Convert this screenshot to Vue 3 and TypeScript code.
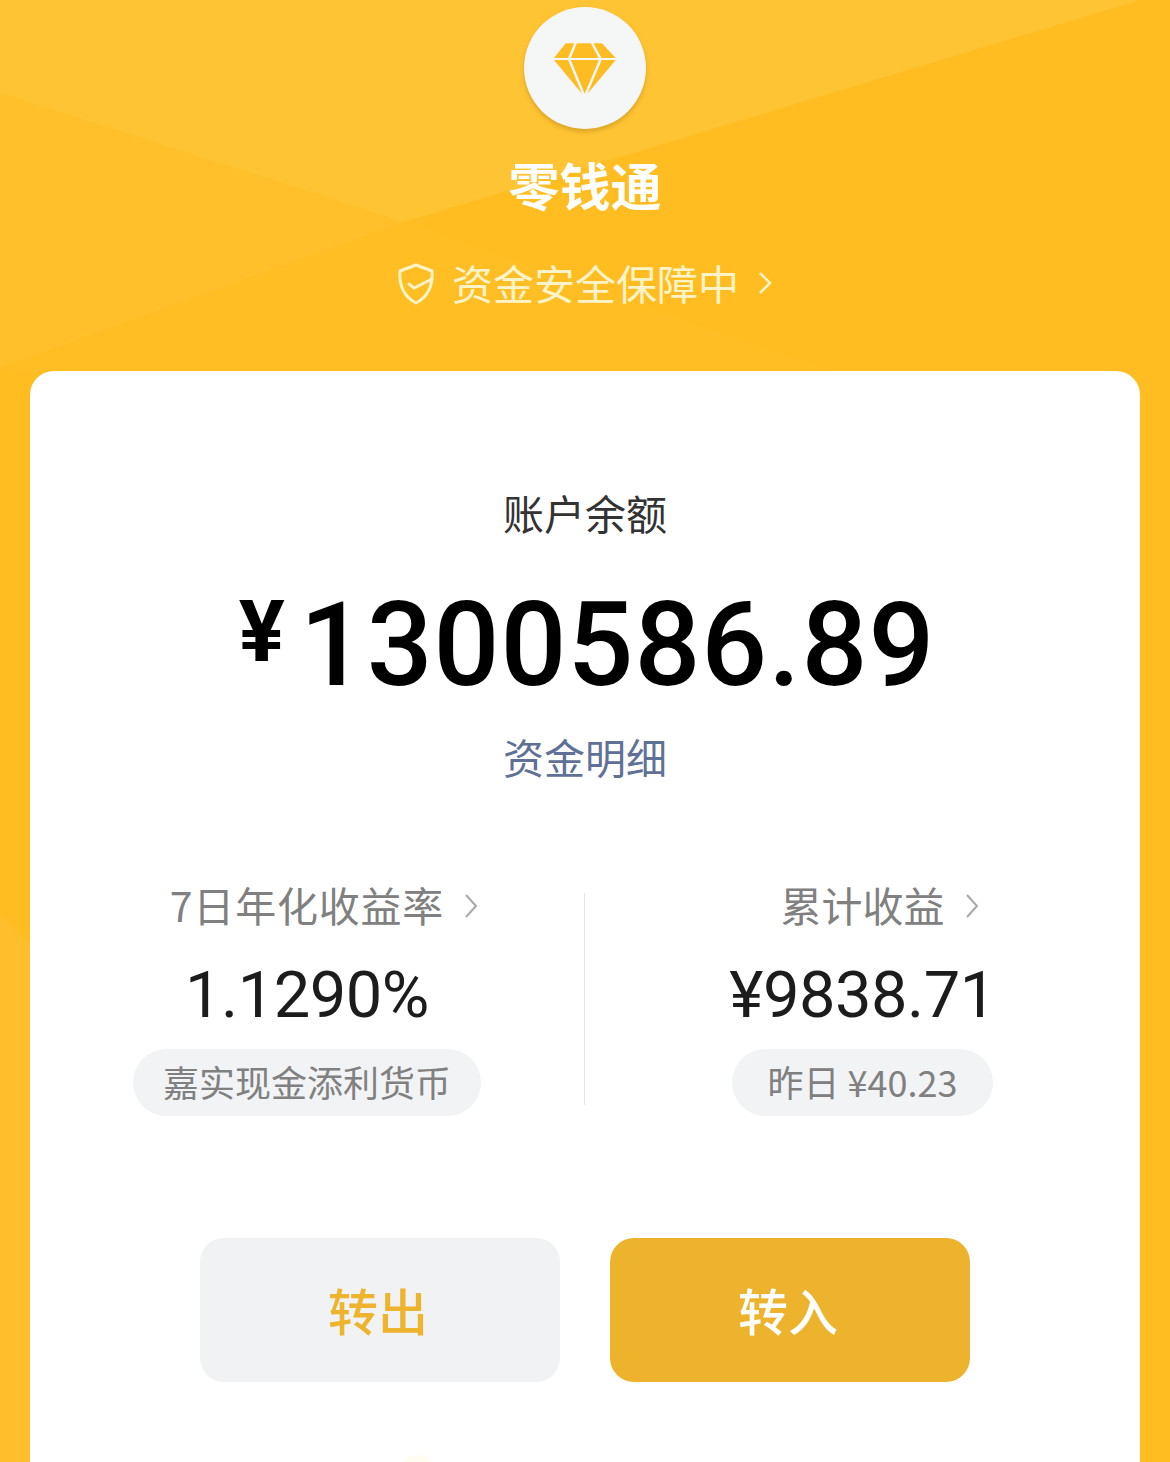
<script setup lang="ts">
interface Stat { label: string; value: string; pill: string; cls: string }
const stats: Stat[] = [
  { label: '7日年化收益率', value: '1.1290%', pill: '嘉实现金添利货币', cls: 'left' },
  { label: '累计收益', value: '¥9838.71', pill: '昨日 ¥40.23', cls: 'right' },
]
</script>

<template>
  <div class="page">
    <svg class="bg" width="1170" height="1462" viewBox="0 0 1170 1462" aria-hidden="true">
      <polygon points="0,0 1140,0 404,222 0,93" fill="#ffc433" />
      <polygon points="0,93 404,222 0,368" fill="#ffc02b" />
      <polygon points="404,222 830,371 500,371 0,371" fill="#ffbe23" />
      <polygon points="0,915 30,945 30,1462 0,1462" fill="#ffbf2c" />
    </svg>
    <header class="head">
      <div class="logo">
        <svg width="62" height="56" viewBox="0 0 62 56">
          <path d="M11.700 1.300H48L61.700 16H0Z" fill="#fdbc22" />
          <path d="M0 18H61.700L30.700 55Z" fill="#fdbc22" />
          <path d="M21.700 1 15 17 30.700 55M38 1 46.700 17 30.700 55" fill="none" stroke="#f5f6f6" stroke-width="2.500" />
        </svg>
      </div>
      <h1 class="title">零钱通</h1>
      <div class="safe">
        <svg class="shield" width="38" height="42" viewBox="0 0 38 42" fill="none" stroke="#fff3c9" stroke-width="3">
          <path d="M19 2 35 8C36 22 32 33 19 40 6 33 2 22 3 8Z" stroke-linejoin="round" />
          <path d="M12 21 17 25 35 16" stroke-linecap="round" />
        </svg>
        <span>资金安全保障中</span>
        <svg class="arrow" width="14" height="24" viewBox="0 0 14 24" fill="none" stroke="#fff3c9" stroke-width="2.500"><path d="M2 2 12 12 2 22" /></svg>
      </div>
    </header>

    <main class="card">
      <div class="balance-label">账户余额</div>
      <div class="balance"><span class="yen">¥</span><span>1300586.89</span></div>
      <div class="detail">资金明细</div>

      <section class="stats">
        <div v-for="s in stats" :key="s.label" class="stat" :class="s.cls">
          <div class="stat-label">
            <span>{{ s.label }}</span>
            <svg width="14" height="26" viewBox="0 0 14 26" fill="none" stroke="#a8a8a8" stroke-width="2"><path d="M2 2 12 13 2 24" /></svg>
          </div>
          <div class="stat-value">{{ s.value }}</div>
          <div class="pill">{{ s.pill }}</div>
        </div>
      </section>

      <div class="actions">
        <button class="btn out">转出</button>
        <button class="btn in">转入</button>
      </div>
      <span class="peek"></span>
    </main>
  </div>
</template>

<style>
html, body { margin: 0; background: #ffbd22; }
</style>

<style scoped>
.page {
  position: relative;
  width: 1170px;
  height: 1462px;
  overflow: hidden;
  background: #ffbd22;
  font-family: "Noto Sans CJK SC", "Noto Sans", sans-serif;
}
.bg { position: absolute; left: 0; top: 0; }
.head {
  position: relative;
  height: 371px;
  box-sizing: border-box;
  padding-top: 7px;
  display: flex;
  flex-direction: column;
  align-items: center;
}
.logo {
  width: 122px;
  height: 122px;
  border-radius: 50%;
  background: #f5f6f6;
  box-shadow: 0 3px 4px rgba(190, 140, 30, .55);
  display: flex;
  align-items: center;
  justify-content: center;
}
.logo svg { margin-top: 4px; }
.title {
  margin: 25px 0 0;
  font-size: 51px;
  line-height: 60px;
  font-weight: 700;
  color: #fff;
}
.safe {
  margin-top: 43px;
  display: flex;
  align-items: center;
  color: #fff3c9;
  font-size: 41px;
  line-height: 50px;
}
.shield { margin-right: 17px; margin-top: 3px; }
.arrow { margin-left: 19px; margin-right: 1px; margin-top: 2px; }
.card {
  position: relative;
  margin: 0 30px;
  height: 1200px;
  box-sizing: border-box;
  padding-top: 116px;
  background: #fff;
  border-radius: 24px 24px 0 0;
  display: flex;
  flex-direction: column;
  align-items: center;
}
.balance-label { font-size: 41px; line-height: 50px; color: #333; }
.balance {
  margin-top: 38px;
  display: flex;
  align-items: flex-start;
  font-family: Roboto, sans-serif;
  font-weight: 500;
  font-size: 116px;
  line-height: 140px;
  letter-spacing: 1px;
  color: #000;
}
.yen { font-size: 86px; line-height: 80px; font-weight: 700; margin: 17px 14px 0 4px; }
.detail { margin-top: 16px; font-size: 41px; line-height: 50px; color: #5f7196; }
.stats {
  margin-top: 112px;
  width: 100%;
  display: grid;
  grid-template-columns: 1fr 1fr;
}
.stat { display: flex; flex-direction: column; align-items: center; height: 212px; }
.stat.left { border-right: 1px solid #e3e3e3; }
.stat-label {
  position: relative;
  font-size: 41px;
  line-height: 22px;
  color: #808080;
  white-space: nowrap;
}
.left .stat-label { letter-spacing: .8px; }
.stat-label svg { position: absolute; left: 100%; top: 0; margin-left: 20px; }
.stat-value {
  margin-top: 40px;
  font-family: Roboto, sans-serif;
  font-size: 65px;
  line-height: 80px;
  letter-spacing: -.5px;
  color: #1c1c1c;
  white-space: nowrap;
}
.pill {
  margin-top: 14px;
  height: 67px;
  flex: none;
  padding: 0 30px;
  border-radius: 34px;
  background: #f2f3f5;
  color: #808080;
  font-size: 36px;
  line-height: 64px;
  white-space: nowrap;
}
.right .pill { padding: 0 36px; }
.actions { margin-top: 133px; display: flex; gap: 50px; }
.btn {
  width: 360px;
  height: 144px;
  padding: 0 4px 2px 0;
  border: 0;
  border-radius: 24px;
  font-family: inherit;
  font-size: 50px;
  font-weight: 500;
}
.out { background: #f1f2f4; color: #eeb42d; }
.in { background: #eeb32c; color: #fff; }
.peek {
  position: absolute;
  left: 372px;
  top: 1084px;
  width: 31px;
  height: 20px;
  border-radius: 50%;
  background: #fffdf0;
}
</style>
